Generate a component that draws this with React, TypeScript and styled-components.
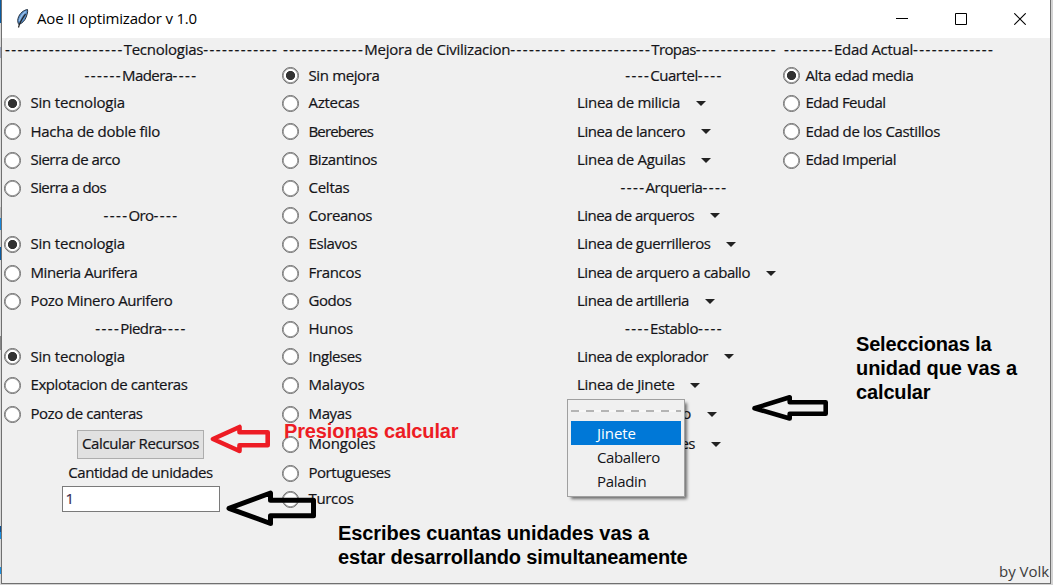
import React, { useLayoutEffect, useRef, useState } from "react";
import styled, { createGlobalStyle } from "styled-components";

const GlobalStyle = createGlobalStyle`
  * { box-sizing: border-box; }
  body {
    margin: 0;
    overflow: hidden;
    background: #d3d3d3;
    font-family: "Open Sans", "Noto Sans", sans-serif;
    font-size: 15px;
    line-height: 20px;
    color: #141418;
  }
`;

/* ---------- text fitted to the toolkit's label width ---------- */

const Word = styled.span`
  display: inline-block;
  flex: none;
  padding-bottom: 2px;
  white-space: nowrap;
`;

function Label({ w, children }: { w: number; children: string }) {
  const ref = useRef<HTMLSpanElement>(null);
  const [tracking, setTracking] = useState(0);
  useLayoutEffect(() => {
    if (!ref.current) return;
    const natural = ref.current.getBoundingClientRect().width;
    setTracking((w + 1 - natural) / children.length);
  }, [w, children]);
  return (
    <Word ref={ref} style={{ letterSpacing: tracking }}>
      {children}
    </Word>
  );
}

/* ---------- window frame ---------- */

const Desktop = styled.div`
  position: relative;
  display: flex;
  width: 1053px;
  height: 585px;
`;

const Behind = styled.div`
  flex: none;
  width: 1px;
  background: linear-gradient(
    #0a5ba0 0 23px, #d8d8d8 23px 47px, #9aa3b8 47px 58px, #dcdcdc 58px 207px,
    #bcbcbc 207px 218px, #1a86d8 218px 230px, #d0d0d0 230px 247px, #0a5ba0 247px 260px,
    #dcdcdc 260px 336px, #888 336px 350px, #d8d8d8 350px 526px, #0a4f92 526px 532px,
    #1a8fe0 532px 539px, #d8d8d8 539px 567px, #1a8fe0 567px 574px, #d8d8d8 574px
  );
`;

const Window = styled.div`
  display: flex;
  flex-direction: column;
  width: 1050px;
  height: 584px;
  background: #f0f0f0;
  border: 1px solid #707070;
  border-top: 0;
`;

const TitleBar = styled.header`
  display: flex;
  align-items: center;
  height: 38px;
  flex: none;
  background: #fff;
  color: #000;
  padding-left: 12px;
`;

const Title = styled.div`
  flex: 1;
  padding-left: 7px;
`;

const WindowButton = styled.div`
  width: 59px;
  height: 38px;
  display: flex;
  align-items: center;
  justify-content: center;
`;

const WindowButtons = styled.div`
  display: flex;
  margin-right: 1px;
`;

/* ---------- form grid ---------- */

const Form = styled.main`
  display: grid;
  grid-auto-flow: column;
  grid-template-columns: 278px 287px 214px 269px;
  grid-template-rows: 24px 27px 28px 29px 28px 28px 27px 30px 28px 28px 28px 27px 30px 28px 32px 26px 26px;
  -webkit-text-stroke: 0.2px currentColor;
`;

const Column = styled.section`
  display: grid;
  grid-row: 1 / -1;
  grid-template-rows: subgrid;
`;

const Heading = styled.div<{ $main?: boolean }>`
  display: flex;
  align-items: center;
  justify-content: ${(p) => (p.$main ? "flex-start" : "center")};
  padding-left: ${(p) => (p.$main ? 3 : 0)}px;
`;

const Dashes = styled.span`
  padding-bottom: 2px;
  letter-spacing: 1.42px;
`;

const RadioRow = styled.label<{ $gap: number }>`
  display: flex;
  align-items: center;
  gap: ${(p) => p.$gap}px;
  padding-left: 2px;
`;

const Dot = styled.span<{ $on?: boolean }>`
  flex: none;
  width: 17px;
  height: 17px;
  border: 1px solid #6a6a6a;
  box-shadow: inset 0 0 0 0.7px #8a8a8a;
  border-radius: 50%;
  background: ${(p) => (p.$on ? "radial-gradient(circle, #333 4.2px, #fff 5px)" : "#fff")};
`;

const MenuButton = styled.div`
  display: flex;
  align-items: center;
  gap: 15.5px;
  padding-left: 10px;
`;

const Caret = styled.span`
  border: 5px solid transparent;
  border-top-color: #222;
  border-bottom: 0;
`;

const Centered = styled.div`
  display: flex;
  align-items: center;
  justify-content: center;
  padding-right: 1px;
`;

const Button = styled.button`
  display: flex;
  align-items: center;
  justify-content: center;
  width: 127px;
  height: 29px;
  padding: 0;
  font: inherit;
  color: inherit;
  background: #e1e1e1;
  border: 1px solid #adadad;
`;

const Entry = styled.div`
  width: 158px;
  height: 26px;
  padding: 2px 3px;
  line-height: 19px;
  background: #fff;
  border: 1px solid #7a7a7a;
  color: #3a2c50;
`;

const Footer = styled.footer`
  display: flex;
  flex: 1;
  align-items: flex-end;
  justify-content: flex-end;
  padding-right: 1px;
  color: #3c3c3c;
`;

/* ---------- popup menu ---------- */

const Popup = styled.div`
  position: absolute;
  left: 567px;
  top: 399px;
  width: 118px;
  height: 98px;
  padding: 2px 3px;
  background: #f0f0f0;
  border: 1px solid #a0a0a0;
  box-shadow: 3px 3px 3px -1px rgba(0, 0, 0, 0.55);
`;

const TearOff = styled.div`
  height: 19px;
  padding-top: 8px;

  &::before {
    content: "";
    display: block;
    height: 2px;
    background: repeating-linear-gradient(90deg, #b4b4b4 0 8px, #f8f8f8 8px 15px);
  }
`;

const PopupItem = styled.div<{ $active?: boolean }>`
  height: 24px;
  padding: 2px 0 0 26px;
  color: ${(p) => (p.$active ? "#fff" : "inherit")};
  background: ${(p) => (p.$active ? "#0078d7" : "none")};
`;

/* ---------- annotations over the window ---------- */

const Note = styled.div<{ $x: number; $y: number; $color?: string }>`
  position: absolute;
  left: ${(p) => p.$x}px;
  top: ${(p) => p.$y}px;
  display: flex;
  flex-direction: column;
  align-items: flex-start;
  font: bold 20px/24px "Liberation Sans", sans-serif;
  color: ${(p) => p.$color ?? "#000"};

  ${Word} {
    padding-bottom: 0;
  }
`;

const Arrows = styled.svg`
  position: absolute;
  left: 0;
  top: 0;
  pointer-events: none;
`;

/* ---------- data ---------- */

type Row =
  | { kind: "head"; text: string; w: number; left: number; right: number; main?: boolean }
  | { kind: "radio"; text: string; w: number; on?: boolean }
  | { kind: "menu"; text: string; w: number };

const head = (text: string, w: number, left = 4, right = 4, main = false): Row => ({ kind: "head", text, w, left, right, main });
const radio = (text: string, w: number, on = false): Row => ({ kind: "radio", text, w, on });
const menu = (text: string, w: number): Row => ({ kind: "menu", text, w });

const tecnologias: Row[] = [
  head("Tecnologias", 78.5, 19, 12, true),
  head("Madera", 49.5, 6, 4),
  radio("Sin tecnologia", 93.5, true),
  radio("Hacha de doble filo", 128.5),
  radio("Sierra de arco", 88.5),
  radio("Sierra a dos", 74.5),
  head("Oro", 24),
  radio("Sin tecnologia", 93.5, true),
  radio("Mineria Aurifera", 106),
  radio("Pozo Minero Aurifero", 141),
  head("Piedra", 40.5),
  radio("Sin tecnologia", 93.5, true),
  radio("Explotacion de canteras", 156),
  radio("Pozo de canteras", 111),
];

const civilizaciones: Row[] = [
  head("Mejora de Civilizacion", 145, 13, 9, true),
  radio("Sin mejora", 70, true),
  radio("Aztecas", 50),
  radio("Bereberes", 63.5),
  radio("Bizantinos", 67.5),
  radio("Celtas", 40),
  radio("Coreanos", 62.5),
  radio("Eslavos", 47.5),
  radio("Francos", 51.5),
  radio("Godos", 42),
  radio("Hunos", 43.5),
  radio("Ingleses", 52),
  radio("Malayos", 55),
  radio("Mayas", 42),
  radio("Mongoles", 66),
  radio("Portugueses", 81),
  radio("Turcos", 44),
];

const tropas: Row[] = [
  head("Tropas", 43.5, 13, 13, true),
  head("Cuartel", 46.5),
  menu("Linea de milicia", 102),
  menu("Linea de lancero", 107),
  menu("Linea de Aguilas", 107.5),
  head("Arqueria", 56),
  menu("Linea de arqueros", 116),
  menu("Linea de guerrilleros", 132.5),
  menu("Linea de arquero a caballo", 172),
  menu("Linea de artilleria", 111),
  head("Establo", 47),
  menu("Linea de explorador", 130),
  menu("Linea de Jinete", 96.5),
  menu("Linea de camello", 113),
  menu("Linea de elefantes", 117),
];

const edades: Row[] = [
  head("Edad Actual", 78, 8, 13, true),
  radio("Alta edad media", 107, true),
  radio("Edad Feudal", 79),
  radio("Edad de los Castillos", 133.5),
  radio("Edad Imperial", 89.5),
];

function Rows({ rows, gap = 9.5 }: { rows: Row[]; gap?: number }) {
  return (
    <>
      {rows.map((r, i) => {
        const label = <Label w={r.w}>{r.text}</Label>;
        if (r.kind === "head")
          return (
            <Heading key={i} $main={r.main}>
              <Dashes>{"-".repeat(r.left)}</Dashes>
              {label}
              <Dashes>{"-".repeat(r.right)}</Dashes>
            </Heading>
          );
        if (r.kind === "radio")
          return (
            <RadioRow key={i} $gap={gap}>
              <Dot $on={r.on} />
              {label}
            </RadioRow>
          );
        return (
          <MenuButton key={i}>
            {label}
            <Caret />
          </MenuButton>
        );
      })}
    </>
  );
}

function Feather() {
  return (
    <svg width="16" height="20" viewBox="0 0 16 20">
      <path d="M13.5 0.5C10 1 5.500 4 4 9.500C3.300 12 4 14 4.800 15.500C8 14.500 11 11.500 12.200 8C13.200 5 14 3 13.500.5Z" fill="#5a90cc" stroke="#26323f" strokeWidth="1" />
      <path d="M11.800 2.500C8.500 5 6.300 8 5.300 12" fill="none" stroke="#9cc2ea" strokeWidth="1.300" />
      <path d="M11.500 5C9.500 8 6 12 4.500 18.500" fill="none" stroke="#222" strokeWidth="1.200" />
    </svg>
  );
}

export default function App() {
  return (
    <Desktop>
      <GlobalStyle />
      <Behind />
      <Window>
        <TitleBar>
          <Feather />
          <Title>
            <Label w={159}>Aoe II optimizador v 1.0</Label>
          </Title>
          <WindowButtons>
            <WindowButton>
              <svg width="12" height="12"><path d="M0 5.500H12" stroke="#000" /></svg>
            </WindowButton>
            <WindowButton>
              <svg width="12" height="12"><path d="M.5.5H11.500V11.500H.5Z" fill="none" stroke="#000" /></svg>
            </WindowButton>
            <WindowButton>
              <svg width="12" height="12"><path d="M.3.3L11.700 11.700M11.700.3L.3 11.700" stroke="#000" strokeWidth="1.100" /></svg>
            </WindowButton>
          </WindowButtons>
        </TitleBar>
        <Form>
          <Column>
            <Rows rows={tecnologias} />
            <Centered>
              <Button><Label w={116}>Calcular Recursos</Label></Button>
            </Centered>
            <Centered><Label w={143.5}>Cantidad de unidades</Label></Centered>
            <Centered><Entry>1</Entry></Centered>
          </Column>
          <Column><Rows rows={civilizaciones} /></Column>
          <Column><Rows rows={tropas} /></Column>
          <Column><Rows rows={edades} gap={5.5} /></Column>
        </Form>
        <Footer><Label w={49}>by Volk</Label></Footer>
      </Window>

      <Popup>
        <TearOff />
        <PopupItem $active><Label w={38}>Jinete</Label></PopupItem>
        <PopupItem><Label w={62}>Caballero</Label></PopupItem>
        <PopupItem><Label w={48.5}>Paladin</Label></PopupItem>
      </Popup>

      <Note $x={284} $y={419} $color="#ed1c24">
        <Label w={173.5}>Presionas calcular</Label>
      </Note>
      <Note $x={338} $y={521}>
        <Label w={310}>Escribes cuantas unidades vas a</Label>
        <Label w={348.5}>estar desarrollando simultaneamente</Label>
      </Note>
      <Note $x={856} $y={332}>
        <Label w={134.5}>Seleccionas la</Label>
        <Label w={160}>unidad que vas a</Label>
        <Label w={73.5}>calcular</Label>
      </Note>
      <Arrows width="1053" height="585" fill="none" strokeLinejoin="round">
        <path d="M213 439L239.500 427V432.300H267.700V445.300H239.500V451Z" stroke="#ed1c24" strokeWidth="4.600" />
        <path d="M229 508.300L270.500 493V500.300H313.500V515.800H270.500V523.500Z" stroke="#000" strokeWidth="5" />
        <path d="M754.500 408.300L789.700 397.300V402.300H825.700V413.700H789.700V418.500Z" stroke="#000" strokeWidth="4.600" />
      </Arrows>
    </Desktop>
  );
}
